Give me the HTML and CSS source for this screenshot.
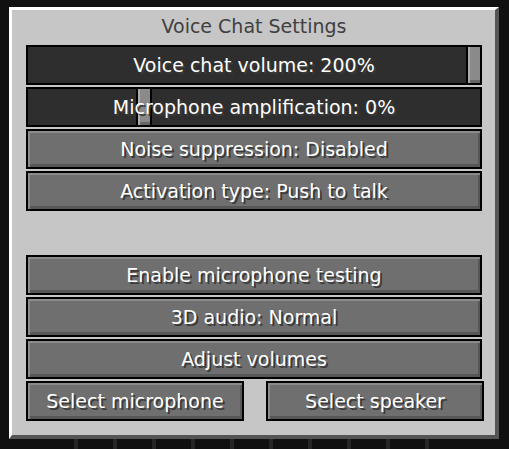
FILE: index.html
```html
<!DOCTYPE html>
<html lang="en">
<head>
  <meta charset="UTF-8">
  <meta name="viewport" content="width=device-width, initial-scale=1.0">
  <title>Voice Chat Settings</title>
  <link rel="stylesheet" href="styles.css">
</head>
<body>
  <div class="screen">
    <div class="panel">
      <h1 class="title">Voice Chat Settings</h1>
      <div class="options">
        <div class="slider">
          <span class="handle" style="left: 438px"></span>
          <span class="label">Voice chat volume: 200%</span>
        </div>
        <div class="slider">
          <span class="handle" style="left: 108px"></span>
          <span class="label">Microphone amplification: 0%</span>
        </div>
        <div class="btn">Noise suppression: Disabled</div>
        <div class="btn">Activation type: Push to talk</div>
        <div class="spacer"></div>
        <div class="btn">Enable microphone testing</div>
        <div class="btn">3D audio: Normal</div>
        <div class="btn">Adjust volumes</div>
        <div class="pair">
          <div class="btn">Select microphone</div>
          <div class="btn">Select speaker</div>
        </div>
      </div>
    </div>
    <div class="floor"></div>
  </div>
</body>
</html>
```

FILE: styles.css
```css
*{
  margin: 0;
  padding: 0;
  box-sizing: border-box;
}
body{
  background: #101010;
  font-family: "DejaVu Sans", sans-serif;
  font-size: 19px;
}
.screen{
  width: 509px;
  height: 449px;
  padding: 7px 0 0 9px;
  overflow: hidden;
}
.panel{
  width: 490px;
  height: 432px;
  background: #c6c6c6;
  border-top: 3px solid #ffffff;
  border-left: 3px solid #ffffff;
  border-right: 4px solid #555555;
  border-bottom: 4px solid #555555;
  padding-left: 14px;
}
.title{
  font-size: 19px;
  font-weight: normal;
  color: #404040;
  text-align: center;
  line-height: 22px;
  padding-top: 5px;
  width: 456px;
}
.options{
  margin-top: 8px;
  width: 456px;
  display: flex;
  flex-direction: column;
  gap: 2px;
}
.spacer{
  height: 40px;
}
.slider,
.btn{
  position: relative;
  height: 40px;
  border: 2px solid #000;
  display: flex;
  align-items: center;
  justify-content: center;
  color: #ffffff;
  text-shadow: 2px 2px 0 #3a3a3a;
  white-space: nowrap;
}
.slider{
  background: #2e2e2e;
}
.btn{
  background: #6f6f6f;
  box-shadow: inset 2px 2px 0 #8b8b8b, inset -2px -3px 0 #575757;
}
.slider .label{
  position: relative;
}
.slider .handle{
  position: absolute;
  top: 0;
  bottom: 0;
  width: 16px;
  border-left: 2px solid #000;
  border-right: 2px solid #000;
  background: #8a8a8a;
  box-shadow: inset 2px 0 0 #ababab, inset 0 -3px 0 #666666;
}
.pair{
  display: grid;
  grid-template-columns: 218px 218px;
  column-gap: 22px;
}
.floor{
  height: 10px;
  margin-left: 65px;
  width: 372px;
  background: repeating-linear-gradient(90deg, #262626 0 4px, transparent 4px 39px);
}
```
